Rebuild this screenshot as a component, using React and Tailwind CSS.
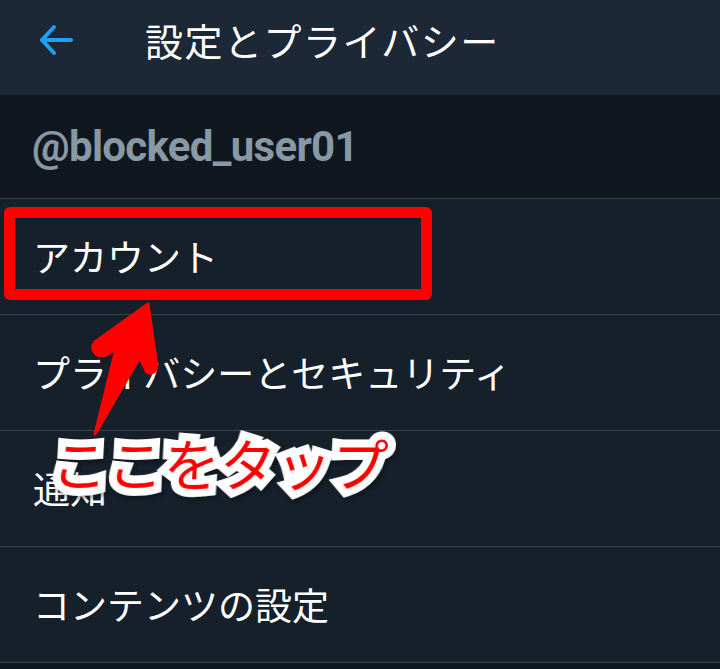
import React from "react";

const jp = "font-['Noto_Sans_CJK_JP','Noto_Sans',sans-serif]";

function Row({ children, last }) {
  return (
    <div className={`h-[116px] flex items-center px-[33px] border-b border-[#38444d] ${last ? "border-b-0" : ""}`}>
      <span className={`${jp} text-[37px] leading-none text-white`}>{children}</span>
    </div>
  );
}

export default function App() {
  return (
    <div className="relative w-[720px] h-[669px] overflow-hidden bg-[#15202b]">
      <header className="h-[95px] bg-[#1c2836] flex items-start pt-[20px]">
        <div className="w-[145px] pl-[38px] pt-[2px]">
          <svg width="36" height="36" viewBox="0 0 36 36" fill="none" stroke="#1da1f2" strokeWidth="4" strokeLinecap="round" strokeLinejoin="round">
            <path d="M4 18 H33" />
            <path d="M16 5 L4 18 L16 31" />
          </svg>
        </div>
        <h1 className={`${jp} text-[38px] leading-[40px] tracking-[1.5px] text-white font-normal`}>設定とプライバシー</h1>
      </header>
      <div className="h-[104px] bg-[#10171e] flex items-center px-[32px] border-b border-[#38444d]">
        <span className="font-['Roboto',sans-serif] font-bold text-[42px] leading-none text-[#8899a6] tracking-[-0.7px]">@blocked_user01</span>
      </div>
      <Row>アカウント</Row>
      <Row>プライバシーとセキュリティ</Row>
      <Row>通知</Row>
      <Row>コンテンツの設定</Row>
      <div className="h-[6px] bg-[#10171e]" />

      {/* red highlight box */}
      <div className="absolute left-[4px] top-[207px] w-[428px] h-[93px] border-[11px] border-[#ff0000] rounded-[6px]" />

      {/* arrow */}
      <svg className="absolute left-0 top-0 pointer-events-none" width="720" height="669" viewBox="0 0 720 669">
        <path
          d="M148 304 L95 342 Q90 348 96 354 Q101 358 108 354 L116 349 L95 434 L140 357 L146 371 Q150 376 155 371 Q158 366 156 360 Z"
          fill="#ff0000"
          stroke="#ff0000"
          strokeWidth="3"
          strokeLinejoin="round"
        />
      </svg>

      {/* annotation text */}
      <div
        className={`absolute left-[52px] top-[434px] ${jp} font-normal text-[56px] leading-none text-[#ff0000] -skew-x-3 [paint-order:stroke_fill] [-webkit-text-stroke:16px_white] drop-shadow-[2px_3px_2px_rgba(0,0,0,0.35)]`}
      >
        ここをタップ
      </div>
    </div>
  );
}
